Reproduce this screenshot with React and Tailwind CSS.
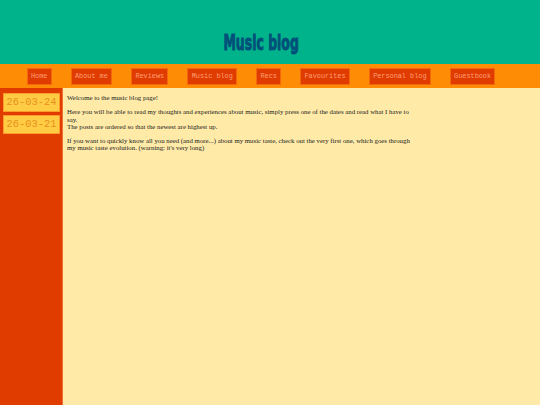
import React from 'react'

const links = ['Home', 'About me', 'Reviews', 'Music blog', 'Recs', 'Favourites', 'Personal blog', 'Guestbook']
const dates = ['26-03-24', '26-03-21']

const App = () => {
  return (
    <div className="min-h-[405px] h-[405px] flex flex-col bg-[#ffeaa8]">
      <header className="h-[64px] bg-[#00b38a] flex items-end justify-center pb-[10px] pr-[18px]">
        <h1 className="text-[21px] leading-none text-[#00507a] font-black scale-x-[0.66] [-webkit-text-stroke:0.9px_#00507a]" style={{ fontFamily: "Impact, 'Liberation Sans Narrow', 'DejaVu Sans Condensed', sans-serif" }}>
          Music blog
        </h1>
      </header>
      <nav className="h-[24px] bg-[#ff8c05] flex items-center justify-center gap-[19px] pr-[18px]">
        {links.map((l) => (
          <a key={l} className="h-[17px] px-[3.3px] flex items-center bg-[#e03c00] border border-[#f5670f] text-[#ff9f78] text-[6.85px]" style={{ fontFamily: "'Liberation Mono', monospace" }}>
            {l}
          </a>
        ))}
      </nav>
      <div className="flex flex-1">
        <aside className="w-[63px] bg-[#e03c00] border-r border-[#f07030] pt-[5px] pl-[3px] flex flex-col gap-[3px]">
          {dates.map((d) => (
            <div key={d} className="w-[57px] h-[19px] bg-[#ffcc44] border border-[#ff9a2a] text-[#e8901c] text-[10.4px] flex items-center justify-center" style={{ fontFamily: "'Liberation Mono', monospace" }}>
              {d}
            </div>
          ))}
        </aside>
        <main className="pl-[4px] pt-[6px] w-[348px] text-[6.8px] leading-[7.3px] text-[#1a1a1a]" style={{ fontFamily: "'Liberation Serif', serif" }}>
          <p className="mb-[7px]">Welcome to the music blog page!</p>
          <p className="mb-[7px]">
            Here you will be able to read my thoughts and experiences about music, simply press one of the dates and read what I have to say.
            <br />
            The posts are ordered so that the newest are highest up.
          </p>
          <p>If you want to quickly know all you need (and more...) about my music taste, check out the very first one, which goes through my music taste evolution. (warning: it's very long)</p>
        </main>
      </div>
    </div>
  )
}

export default App
